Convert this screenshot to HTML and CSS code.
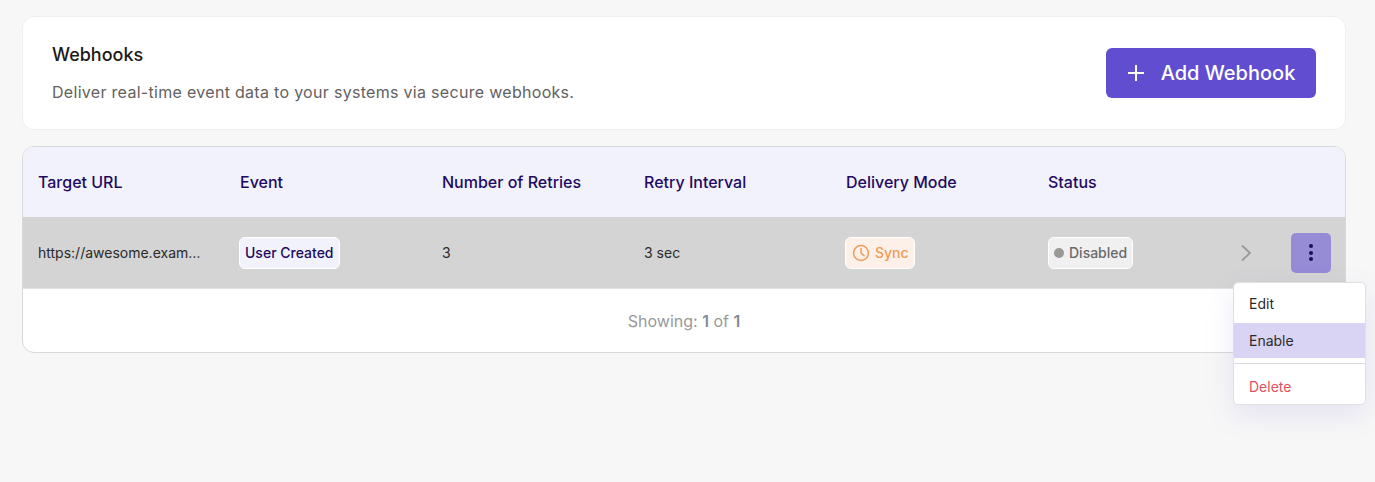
FILE: index.html
```html
<!DOCTYPE html>
<html lang="en">
<head>
    <meta charset="UTF-8">
    <meta name="viewport" content="width=device-width, initial-scale=1.0">
    <title>Webhooks</title>
    <link rel="stylesheet" href="styles.css">
</head>
<body>
    <div class="page">
        <!-- Header card -->
        <div class="header-card">
            <div>
                <h1>Webhooks</h1>
                <p>Deliver real-time event data to your systems via secure webhooks.</p>
            </div>
            <button class="add-btn">
                <svg xmlns="http://www.w3.org/2000/svg" fill="none" viewBox="0 0 18 18" stroke="currentColor">
                    <path stroke-width="2" d="M9 1v16M1 9h16" />
                </svg>
                <span>Add Webhook</span>
            </button>
        </div>

        <!-- Table -->
        <div class="table-card">
            <div class="table-row table-head">
                <div>Target URL</div>
                <div>Event</div>
                <div>Number of Retries</div>
                <div>Retry Interval</div>
                <div>Delivery Mode</div>
                <div>Status</div>
                <div></div>
            </div>
            <div class="table-row table-body">
                <div class="url">https://awesome.example.com/hook</div>
                <div><span class="tag tag-event">User Created</span></div>
                <div>3</div>
                <div>3 sec</div>
                <div>
                    <span class="tag tag-sync">
                        <svg xmlns="http://www.w3.org/2000/svg" fill="none" viewBox="0 0 18 18" stroke="currentColor">
                            <circle cx="9" cy="9" r="7.4" stroke-width="1.5" />
                            <path stroke-width="1.5" stroke-linecap="round" stroke-linejoin="round" d="M9 4.6V9l3 2.6" />
                        </svg>
                        Sync
                    </span>
                </div>
                <div>
                    <span class="tag tag-disabled"><i class="dot"></i>Disabled</span>
                </div>
                <div class="actions">
                    <svg class="chevron" xmlns="http://www.w3.org/2000/svg" fill="none" viewBox="0 0 12 18" stroke="currentColor">
                        <path stroke-width="1.8" d="M2 1.5 10 9l-8 7.5" />
                    </svg>
                    <button class="more-btn">
                        <i></i><i></i><i></i>
                    </button>
                </div>
            </div>
            <div class="table-foot">Showing:&nbsp;<b>1</b>&nbsp;of&nbsp;<b>1</b></div>
        </div>

        <!-- Menu -->
        <div class="menu">
            <div class="menu-item">Edit</div>
            <div class="menu-item active">Enable</div>
            <div class="menu-line"></div>
            <div class="menu-item delete">Delete</div>
        </div>
    </div>
</body>
</html>
```

FILE: styles.css
```css
* {
    box-sizing: border-box;
}

body, html {
    height: 100%;
    margin: 0;
    font-family: Inter, "Liberation Sans", sans-serif;
    background-color: #f7f7f7;
    overflow: hidden;
}

.page {
    position: relative;
    height: 100%;
    padding: 16px 29px 0 22px;
}

.header-card {
    display: flex;
    justify-content: space-between;
    align-items: center;
    height: 114px;
    padding: 0 29px;
    background-color: #fff;
    border: 1px solid #f0f0f0;
    border-radius: 12px;
}

h1 {
    margin: 0 0 13px;
    font-size: 18px;
    line-height: 24px;
    font-weight: 500;
    color: #1c1917;
}

.header-card p {
    margin: 0;
    font-size: 16px;
    line-height: 24px;
    letter-spacing: 0.3px;
    color: #63615f;
}

.add-btn {
    display: flex;
    align-items: center;
    justify-content: center;
    gap: 16px;
    width: 210px;
    height: 50px;
    background-color: #604dcf;
    color: #fff;
    border: none;
    border-radius: 6px;
    font-family: inherit;
    font-size: 20px;
    font-weight: 500;
    cursor: pointer;
}

.add-btn svg {
    width: 18px;
    height: 18px;
}

.table-card {
    margin-top: 16px;
    background-color: #fff;
    border: 1px solid #d9d9d9;
    border-radius: 12px;
    overflow: hidden;
}

.table-row {
    display: grid;
    grid-template-columns: repeat(6, 202px) 1fr;
    align-items: center;
}

.table-row > div {
    padding-left: 15px;
}

.table-head {
    height: 70px;
    background-color: #f2f2fd;
    font-size: 16px;
    font-weight: 500;
    color: #1f0a5f;
}

.table-body {
    height: 72px;
    background-color: #d4d4d4;
    border-bottom: 1px solid #e2e2e2;
    font-size: 14px;
    color: #2b2a29;
}

.table-row > .url {
    width: 180px;
    padding-left: 15px;
    overflow: hidden;
    white-space: nowrap;
    text-overflow: ellipsis;
}

.tag {
    display: inline-flex;
    align-items: center;
    height: 32px;
    padding: 0 5px;
    border: 1px solid #fff;
    border-radius: 6px;
    font-size: 14px;
    font-weight: 500;
}

.tag-event {
    margin-left: -1px;
    background-color: #f2f2fd;
    color: #1f0a5f;
}

.tag-sync {
    gap: 5px;
    margin-left: -1px;
    padding: 0 5px 0 6px;
    background-color: #fcf0e8;
    color: #ee9c58;
}

.tag-sync svg {
    width: 18px;
    height: 18px;
}

.tag-disabled {
    gap: 5px;
    background-color: #f0f0f0;
    color: #6a6a6a;
}

.dot {
    width: 10px;
    height: 10px;
    border-radius: 50%;
    background-color: #999;
}

.actions {
    display: flex;
    align-items: center;
    gap: 39px;
    padding-right: 15px;
}

.table-row > .actions {
    padding-left: 5px;
}

.chevron {
    width: 12px;
    height: 18px;
    color: #999;
}

.more-btn {
    display: flex;
    flex-direction: column;
    align-items: center;
    justify-content: center;
    gap: 2.5px;
    width: 40px;
    height: 40px;
    padding: 0;
    background-color: #968bd5;
    border: none;
    border-radius: 5px;
    cursor: pointer;
}

.more-btn i {
    width: 4px;
    height: 4px;
    border-radius: 50%;
    background-color: #1f0a5f;
}

.table-foot {
    display: flex;
    justify-content: center;
    align-items: center;
    height: 63px;
    font-size: 16px;
    color: #999;
}

.table-foot b {
    font-weight: 600;
    color: #7f8b97;
}

.menu {
    position: absolute;
    top: 282px;
    left: 1233px;
    width: 133px;
    height: 123px;
    padding-top: 1px;
    background-color: #fff;
    border: 1px solid #e0e0e0;
    border-radius: 5px;
    box-shadow: 0 10px 30px rgba(96, 77, 207, 0.12);
    overflow: hidden;
}

.menu-item {
    display: flex;
    align-items: center;
    height: 35px;
    padding-left: 15px;
    font-size: 14px;
    color: #2b2a29;
}

.menu-item:first-child {
    height: 39px;
}

.active {
    background-color: #d9d4f3;
}

.menu-line {
    height: 1px;
    margin-top: 5px;
    background-color: #d9d9d9;
}

.delete {
    margin-top: 5px;
    color: #e0525f;
}
```
